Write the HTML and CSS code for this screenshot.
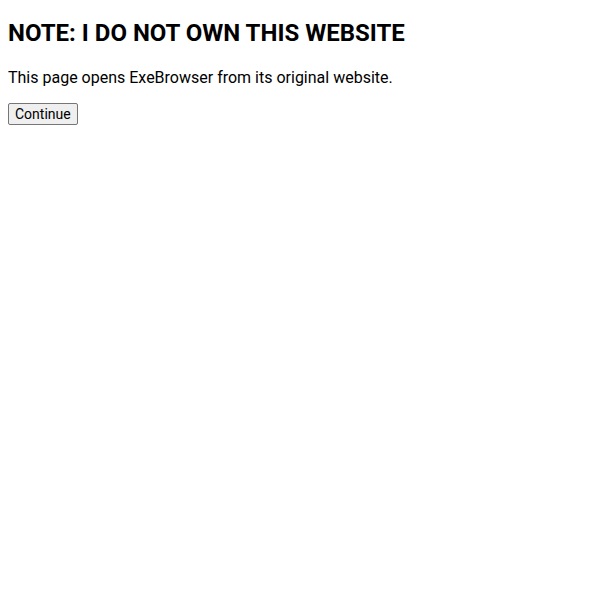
FILE: index.html
```html
<!DOCTYPE html>
<html>
<head>
<meta charset="utf-8">
<link rel="stylesheet" href="styles.css">
</head>
<body class="page">
<h1 class="title">NOTE: I DO NOT OWN THIS WEBSITE</h1>
<p class="note">This page opens ExeBrowser from its original website.</p>
<button class="continue">Continue</button>
</body>
</html>
```
FILE: styles.css
```css
.page {
  margin: 8px;
  font-family: Roboto, "Liberation Sans", sans-serif;
  color: #000;
  background: #fff;
}
.title {
  font-size: 24px;
  font-weight: bold;
  margin: 11px 0 21px;
}
.note {
  font-size: 16px;
  margin: 17px 0 16px;
}
.continue {
  font-family: Roboto, "Liberation Sans", sans-serif;
  font-size: 14px;
  padding: 2px 6px;
  background: #efefef;
  border: 1px solid #767676;
  border-radius: 2px;
  color: #000;
}
```
